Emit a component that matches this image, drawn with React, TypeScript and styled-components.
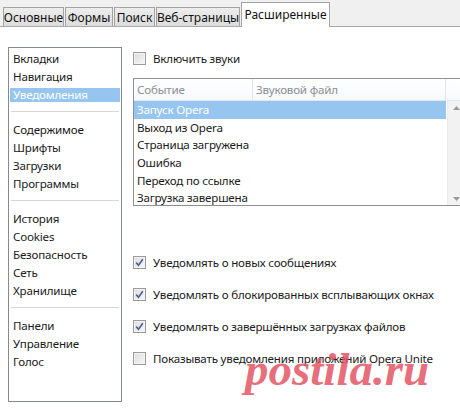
import React from "react";
import styled, { createGlobalStyle } from "styled-components";

const GlobalStyle = createGlobalStyle`
  html, body {
    margin: 0;
    padding: 0;
    background: #ffffff;
    overflow: hidden;
  }
  body {
    font-family: "Noto Sans", "Open Sans", sans-serif;
    font-size: 11.6px;
    letter-spacing: -0.2px;
    color: #1a1a1a;
  }
`;

const Window = styled.div`
  position: relative;
  width: 460px;
  height: 413px;
  overflow: hidden;
  background: #ffffff;
`;

const TabStrip = styled.div`
  display: flex;
  align-items: flex-end;
  gap: 1px;
  height: 26px;
  padding-left: 3px;
  background: #f0f0f0;
  border-bottom: 1px solid #a9a9a9;
`;

const Tab = styled.div<{ $active?: boolean; $width: number }>`
  display: flex;
  align-items: center;
  justify-content: center;
  box-sizing: border-box;
  width: ${({ $width }) => $width}px;
  height: ${({ $active }) => ($active ? 25 : 19)}px;
  margin-bottom: ${({ $active }) => ($active ? -1 : 0)}px;
  padding-bottom: ${({ $active }) => ($active ? 2 : 0)}px;
  border: 1px solid #a3a3a3;
  border-bottom: ${({ $active }) => ($active ? "none" : "0")};
  background: ${({ $active }) =>
    $active ? "#ffffff" : "linear-gradient(#ededed, #dcdcdc)"};
  color: #111;
  font-size: 12px;
  letter-spacing: 0;
  white-space: nowrap;
`;

const Body = styled.div`
  display: flex;
  gap: 11px;
  padding: 20px 0 0 8px;
`;

const CategoryList = styled.div`
  box-sizing: border-box;
  flex: none;
  width: 114px;
  height: 355px;
  padding: 2px 1px;
  border: 1px solid #858991;
  background: #ffffff;
`;

const Category = styled.div<{ $selected?: boolean }>`
  box-sizing: border-box;
  height: 18px;
  display: flex;
  align-items: center;
  padding: ${({ $selected }) => ($selected ? "2px 0" : "0")};
  white-space: nowrap;
  line-height: 14px;
  color: ${({ $selected }) => ($selected ? "#ffffff" : "#1a1a1a")};
  background: ${({ $selected }) => ($selected ? "#96c5ef" : "transparent")};
  background-clip: content-box;
  text-indent: 3px;
`;

const Separator = styled.div`
  height: 1px;
  margin: 7px 1px 9px;
  background: #d6d6d6;
`;

const Content = styled.div`
  flex: 1;
  display: flex;
  flex-direction: column;
  padding-top: 1px;
`;

const CheckRow = styled.label`
  display: flex;
  align-items: center;
  gap: 7px;
  height: 20px;
  white-space: nowrap;
`;

const Box = styled.span`
  box-sizing: border-box;
  display: inline-flex;
  align-items: center;
  justify-content: center;
  width: 13px;
  height: 13px;
  border: 1px solid #9a9a9a;
  background: linear-gradient(135deg, #dcdcdc, #f6f6f6);
  box-shadow: inset 0 0 0 1px #f4f4f4;
`;

const SoundTable = styled.div`
  box-sizing: border-box;
  width: 332px;
  height: 128px;
  margin-top: 10px;
  border: 1px solid #8c9096;
  display: flex;
  flex-direction: column;
  overflow: hidden;
`;

const HeaderRow = styled.div`
  display: flex;
  height: 21px;
  flex: none;
  border-bottom: 1px solid #e3e8ee;
  background: linear-gradient(#ffffff, #f6f9fc);
  color: #8c8f94;
`;

const HeaderCell = styled.div<{ $width: number }>`
  display: flex;
  align-items: center;
  width: ${({ $width }) => $width}px;
  padding-left: 3px;
  box-sizing: border-box;
  border-right: 1px solid #dfe6ee;
`;

const TableBody = styled.div`
  display: flex;
  flex: 1;
`;

const Rows = styled.div`
  width: 312px;
  flex: none;
`;

const EventRow = styled.div<{ $selected?: boolean }>`
  height: 17.6px;
  display: flex;
  align-items: center;
  padding-left: 3px;
  white-space: nowrap;
  color: ${({ $selected }) => ($selected ? "#ffffff" : "#1a1a1a")};
  background: ${({ $selected }) => ($selected ? "#96c5ef" : "transparent")};
`;

const ScrollBar = styled.div`
  flex: 1;
  display: flex;
  flex-direction: column;
  justify-content: space-between;
  align-items: center;
  padding: 5px 0 6px 0;
  background: #f2f2f2;
  border-left: 1px solid #ececec;
  margin-left: 1px;
`;

const Notifications = styled.div`
  display: flex;
  flex-direction: column;
  gap: 12px;
  margin-top: 46px;
`;

const Watermark = styled.div`
  position: absolute;
  left: 245px;
  top: 339px;
  font-family: "Liberation Serif", "DejaVu Serif", serif;
  font-style: italic;
  font-weight: bold;
  font-size: 47px;
  line-height: 60px;
  letter-spacing: 0;
  color: rgba(226, 78, 94, 0.82);
  pointer-events: none;
  white-space: nowrap;
`;

const Check = ({ checked }: { checked?: boolean }) => (
  <Box>
    {checked && (
      <svg width="9" height="9" viewBox="0 0 9 9">
        <path d="M1.2 4.6 L3.5 7.2 L7.8 1.2" fill="none" stroke="#4b5f8f" strokeWidth="1.6" />
      </svg>
    )}
  </Box>
);

const Arrow = ({ up }: { up?: boolean }) => (
  <svg width="7" height="4" viewBox="0 0 7 4">
    <path d={up ? "M0 4 L3.5 0 L7 4 Z" : "M0 0 L3.5 4 L7 0 Z"} fill="#9a9a9a" />
  </svg>
);

const tabs = [
  { label: "Основные", width: 61 },
  { label: "Формы", width: 48 },
  { label: "Поиск", width: 41 },
  { label: "Веб-страницы", width: 84 },
  { label: "Расширенные", width: 89, active: true },
];

const groups = [
  ["Вкладки", "Навигация", "Уведомления"],
  ["Содержимое", "Шрифты", "Загрузки", "Программы"],
  ["История", "Cookies", "Безопасность", "Сеть", "Хранилище"],
  ["Панели", "Управление", "Голос"],
];

const events = [
  "Запуск Opera",
  "Выход из Opera",
  "Страница загружена",
  "Ошибка",
  "Переход по ссылке",
  "Загрузка завершена",
];

const notifications = [
  { label: "Уведомлять о новых сообщениях", checked: true },
  { label: "Уведомлять о блокированных всплывающих окнах", checked: true },
  { label: "Уведомлять о завершённых загрузках файлов", checked: true },
  { label: "Показывать уведомления приложений Opera Unite", checked: false },
];

export default function App() {
  return (
    <Window>
      <GlobalStyle />
      <TabStrip>
        {tabs.map((t) => (
          <Tab key={t.label} $width={t.width} $active={t.active}>
            {t.label}
          </Tab>
        ))}
      </TabStrip>
      <Body>
        <CategoryList>
          {groups.map((g, i) => (
            <React.Fragment key={i}>
              {i > 0 && <Separator />}
              {g.map((c) => (
                <Category key={c} $selected={c === "Уведомления"}>
                  {c}
                </Category>
              ))}
            </React.Fragment>
          ))}
        </CategoryList>
        <Content>
          <CheckRow>
            <Check />
            Включить звуки
          </CheckRow>
          <SoundTable>
            <HeaderRow>
              <HeaderCell $width={119}>Событие</HeaderCell>
              <HeaderCell $width={193}>Звуковой файл</HeaderCell>
            </HeaderRow>
            <TableBody>
              <Rows>
                {events.map((e, i) => (
                  <EventRow key={e} $selected={i === 0}>
                    {e}
                  </EventRow>
                ))}
              </Rows>
              <ScrollBar>
                <Arrow up />
                <Arrow />
              </ScrollBar>
            </TableBody>
          </SoundTable>
          <Notifications>
            {notifications.map((n) => (
              <CheckRow key={n.label}>
                <Check checked={n.checked} />
                {n.label}
              </CheckRow>
            ))}
          </Notifications>
        </Content>
      </Body>
      <Watermark>postila.ru</Watermark>
    </Window>
  );
}
